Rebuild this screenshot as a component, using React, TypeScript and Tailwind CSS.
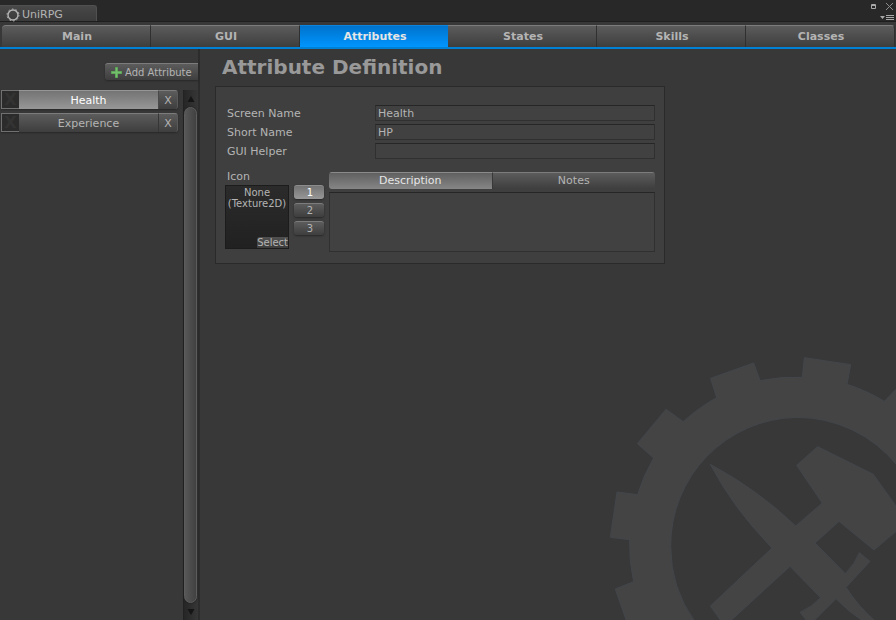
import { useState } from "react";

const SECTIONS = ["Main", "GUI", "Attributes", "States", "Skills", "Classes"];
const ATTRIBUTES = ["Health", "Experience"];

const raised =
  "bg-linear-to-b from-[#5c5c5c] to-[#3e3e3e] border-t border-[#7c7c7c] shadow-[0_1px_2px_#282828]";
const inset =
  "border border-[#303030] border-t-[#262626] bg-[#414141] text-[#b4b4b4] outline-none";

function GearWatermark() {
  return (
    <svg
      aria-hidden="true"
      viewBox="0 0 888 810"
      className="pointer-events-none absolute right-0 bottom-0 h-[270px] w-[296px]"
      fill="#444444"
      stroke="#42464b"
      strokeWidth="3"
    >
      <path d="M80 814 L46 717 L101 695 A505 505 0 0 1 89 569 L31 562 L51 426 L113 434 A505 505 0 0 1 161 324 L112 281 L198 178 L250 215 A505 505 0 0 1 350 143 L332 85 L461 39 L480 92 A505 505 0 0 1 607 82 L613 23 L752 44 L741 103 A505 505 0 0 1 853 154 L892 114 V347 A385 385 0 0 0 590 202 A385 385 0 0 0 212 590 A385 385 0 0 0 284 814 Z" />
      <path d="M331 343 Q475 420 587 528 L667 459 L590 346 L653 290 L820 373 L892 474 V541 L822 600 L717 514 L645 579 L736 671 Q766 640 778 608 L810 634 L738 712 Q776 770 826 814 H790 Q744 784 708 746 L640 814 H622 L600 787 Q636 771 662 743 L570 649 L390 814 H364 L331 768 L516 594 Q400 475 331 343 Z" />
    </svg>
  );
}

function TitleBar() {
  return (
    <header className="flex h-[22px] justify-between border-b border-[#1e1e1e] bg-[#282828]">
      <div className="mt-[5px] flex w-[97px] items-center gap-[2px] rounded-tr-[3px] border-t border-r border-[#505050] bg-linear-to-b from-[#484848] to-[#3b3b3b] pt-[2px] pl-[6px] text-[11px]">
        <svg aria-hidden="true" viewBox="0 0 14 14" className="h-[14px] w-[14px]" fill="none" stroke="#b4b4b4">
          <circle cx="7" cy="7" r="5" strokeWidth="1.4" />
          <circle cx="7" cy="7" r="6" strokeWidth="1" strokeDasharray="1.6 2.17" />
        </svg>
        UniRPG
      </div>
      <div className="flex flex-col items-end gap-[3px] pt-px pr-[2px]">
        <div className="flex gap-[10px] pr-px">
          <button aria-label="Maximize" className="flex h-[10px] items-center">
            <svg viewBox="0 0 5 5" className="h-[5px] w-[5px]" fill="none" stroke="#a8a8a8">
              <path d="M0.5 0.5H4.5V4.5H0.5ZM0 1.5H5" />
            </svg>
          </button>
          <button aria-label="Close" className="flex h-[11px] items-center">
            <svg viewBox="0 0 7 7" className="h-[7px] w-[7px]" stroke="#8c8c8c">
              <path d="M0 0L7 7M7 0L0 7" />
            </svg>
          </button>
        </div>
        <button aria-label="Window menu" className="flex">
          <svg viewBox="0 0 14 5" className="h-[5px] w-[14px]" fill="#a8a8a8">
            <path d="M0 1H5L2.5 4ZM6 0H14V1H6ZM6 2H14V3H6ZM6 4H14V5H6Z" />
          </svg>
        </button>
      </div>
    </header>
  );
}

function Arrow({ down = false }: { down?: boolean }) {
  return (
    <svg aria-hidden="true" viewBox="0 0 8 6" className="h-[6px] w-[8px]" fill="#151515">
      <path d={down ? "M0.5 0H7.5L4 6Z" : "M4 0L7.5 6H0.5Z"} />
    </svg>
  );
}

function Sidebar({ selected, onSelect }: { selected: string; onSelect: (name: string) => void }) {
  return (
    <aside className="flex w-[200px] shrink-0 flex-col border-r-2 border-[#2c2c2c] pt-[14px]">
      <button
        className={`flex h-[17px] w-[93px] items-center gap-[3px] self-end rounded-l-[3px] pl-[6px] text-[10px] whitespace-nowrap ${raised}`}
      >
        <svg aria-hidden="true" viewBox="0 0 11 11" className="h-[11px] w-[11px] shrink-0">
          <path d="M4 0H7V4H11V7H7V11H4V7H0V4H4Z" fill="#4f8f4a" />
          <path d="M4.5 0.5H6.5V4.5H10.5V6.5H6.5V10.5H4.5V6.5H0.5V4.5H4.5Z" fill="#74bf6c" />
        </svg>
        Add Attribute
      </button>
      <div className="mt-[10px] flex flex-1 justify-between">
        <ul className="flex w-[178px] flex-col gap-1 pl-px">
          {ATTRIBUTES.map((name) => (
            <li key={name} className="flex h-[19px] rounded-r-[3px] shadow-[0_1px_2px_#282828]">
              <span className="flex w-[18px] items-center justify-center border border-r-0 border-[#707070] bg-[#2b2b2b] text-[16px] font-bold text-[#333333]">
                X
              </span>
              <button
                onClick={() => onSelect(name)}
                className={
                  name === selected
                    ? "flex-1 border-t border-r border-t-[#969696] border-r-[#4a4a4a] bg-linear-to-b from-[#747474] to-[#979797] text-white"
                    : "flex-1 border-t border-r border-t-[#7c7c7c] border-r-[#363636] bg-linear-to-b from-[#5c5c5c] to-[#3e3e3e]"
                }
              >
                {name}
              </button>
              <button
                aria-label={`Remove ${name}`}
                className="w-[19px] rounded-r-[3px] border-t border-r border-t-[#7c7c7c] border-r-[#5a5a5a] bg-linear-to-b from-[#5c5c5c] to-[#3e3e3e]"
              >
                X
              </button>
            </li>
          ))}
        </ul>
        <div className="flex w-[15px] flex-col border-l border-[#222222] bg-linear-to-r from-[#262626] to-[#363636]">
          <button aria-label="Scroll up" className="flex h-[17px] w-[13px] items-center justify-center">
            <Arrow />
          </button>
          <div className="w-[13px] flex-1 rounded-full border border-[#5c5c5c] bg-linear-to-r from-[#575757] to-[#414141] shadow-[0_0_2px_#1c1c1c]" />
          <button aria-label="Scroll down" className="flex h-[17px] w-[13px] items-center justify-center">
            <Arrow down />
          </button>
        </div>
      </div>
    </aside>
  );
}

function Field({ id, label, value }: { id: string; label: string; value: string }) {
  return (
    <div className="flex items-center">
      <label htmlFor={id} className="w-[148px]">
        {label}
      </label>
      <input id={id} defaultValue={value} className={`h-[16px] min-w-0 flex-1 px-[2px] ${inset}`} />
    </div>
  );
}

function Definition() {
  const [slot, setSlot] = useState(1);
  const [tab, setTab] = useState("Description");
  return (
    <section className="relative w-[450px] border border-[#2a2a2a] bg-[#3f3f3f] px-[9px] pt-[18px] pb-[11px]">
      <div className="flex flex-col gap-[3px] pl-[2px]">
        <Field id="screen-name" label="Screen Name" value="Health" />
        <Field id="short-name" label="Short Name" value="HP" />
        <Field id="gui-helper" label="GUI Helper" value="" />
      </div>
      <div className="mt-[12px] flex">
        <div className="flex flex-col">
          <span className="h-[14px] pl-[2px] leading-[12px]">Icon</span>
          <div className="flex gap-[5px]">
            <div className="flex h-[64px] w-[64px] flex-col justify-between border border-[#1c1c1c] bg-linear-to-b from-[#2b2b2b] to-[#212121] text-center text-[10px] leading-[11px] whitespace-nowrap">
              <div className="flex flex-col items-center pt-px">
                <span>None</span>
                <span>(Texture2D)</span>
              </div>
              <button className="self-end rounded-tl-[3px] bg-linear-to-b from-[#505050] to-[#3c3c3c]">
                Select
              </button>
            </div>
            <div className="flex flex-col gap-1">
              {[1, 2, 3].map((n) => (
                <button
                  key={n}
                  onClick={() => setSlot(n)}
                  className={
                    n === slot
                      ? "h-[14px] w-[30px] rounded-[3px] border-t border-[#8c8c8c] bg-linear-to-b from-[#747474] to-[#979797] pl-[2px] text-[10px] leading-[14px] text-white shadow-[0_1px_2px_#282828]"
                      : `h-[14px] w-[30px] rounded-[3px] pl-[2px] text-[10px] leading-[14px] ${raised}`
                  }
                >
                  {n}
                </button>
              ))}
            </div>
          </div>
        </div>
        <div className="ml-[5px] flex flex-1 flex-col gap-[3px] pt-px">
          <div className="flex h-[17px] overflow-hidden rounded-[3px]">
            {["Description", "Notes"].map((name) => (
              <button
                key={name}
                onClick={() => setTab(name)}
                className={
                  name === tab
                    ? "flex-1 border-t border-r border-t-[#8a8a8a] border-r-[#383838] bg-linear-to-b from-[#606060] to-[#868686] leading-[14px] text-[#e6e6e6]"
                    : "flex-1 border-t border-[#7c7c7c] bg-linear-to-b from-[#5c5c5c] to-[#3e3e3e] leading-[14px]"
                }
              >
                {name}
              </button>
            ))}
          </div>
          <textarea aria-label={tab} className={`block h-[60px] w-full resize-none p-1 ${inset}`} />
        </div>
      </div>
    </section>
  );
}

export default function App() {
  const [section, setSection] = useState("Attributes");
  const [selected, setSelected] = useState("Health");
  return (
    <div className="relative flex min-h-screen flex-col overflow-hidden bg-[#383838] font-['DejaVu_Sans',Verdana,sans-serif] text-[11px] leading-[13px] text-[#b4b4b4]">
      <GearWatermark />
      <TitleBar />
      <nav className="mt-[3px] flex h-[24px] border-b-2 border-[#0080d6] pr-px pl-[2px]">
        {SECTIONS.map((name) => (
          <button
            key={name}
            onClick={() => setSection(name)}
            className={
              name === section
                ? "flex-1 border-t border-[#0a84dc] bg-linear-to-b from-[#0073cc] to-[#0095ff] pl-[2px] font-bold text-[#e6e6e6]"
                : "flex-1 border-t border-r border-t-[#7c7c7c] border-r-[#303030] bg-linear-to-b from-[#5c5c5c] to-[#3e3e3e] pl-[2px] font-bold first:rounded-tl-[4px] last:rounded-tr-[4px]"
            }
          >
            {name}
          </button>
        ))}
      </nav>
      <div className="flex flex-1">
        <Sidebar selected={selected} onSelect={setSelected} />
        <main className="min-w-0 flex-1 pt-[4px] pl-[15px]">
          <h1 className="mb-[5px] pl-[7px] text-[20px] leading-[28px] font-bold text-[#999999]">
            Attribute Definition
          </h1>
          <Definition />
        </main>
      </div>
    </div>
  );
}
